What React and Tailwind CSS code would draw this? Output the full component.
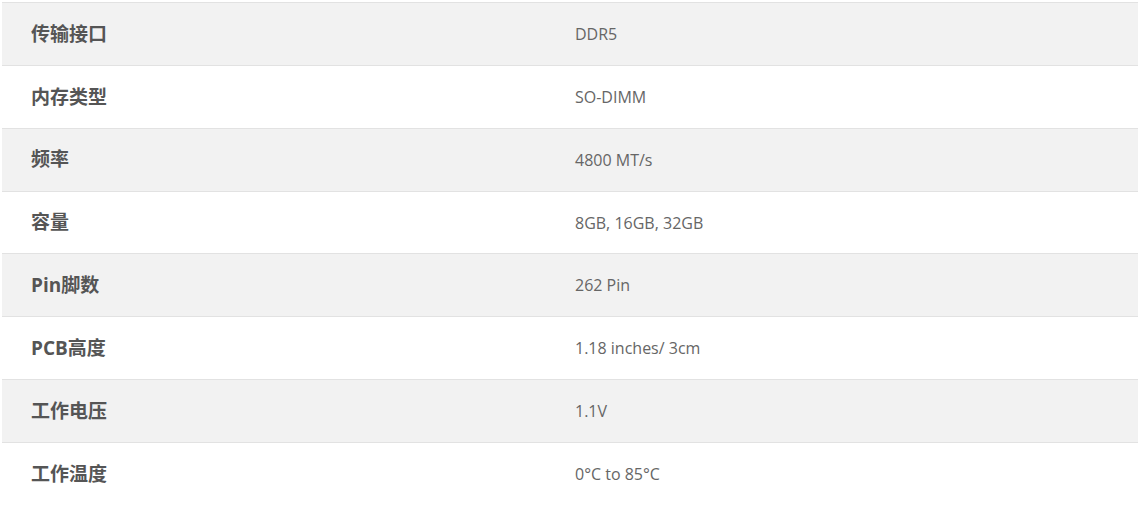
import React from "react";

const rows = [
  ["传输接口", "DDR5"],
  ["内存类型", "SO-DIMM"],
  ["频率", "4800 MT/s"],
  ["容量", "8GB, 16GB, 32GB"],
  ["Pin脚数", "262 Pin"],
  ["PCB高度", "1.18 inches/ 3cm"],
  ["工作电压", "1.1V"],
  ["工作温度", "0°C to 85°C"],
];

export default function App() {
  return (
    <div className="w-[1138px] h-[513px] bg-white overflow-hidden pt-[2px] pl-[2px] font-['Open_Sans','Noto_Sans_CJK_SC',sans-serif]">
      <div className="w-[1136px] flex flex-col">
        {rows.map(([k, v], i) => (
          <div
            key={k}
            className={`h-[62.86px] border-t border-[#e2e2e2] flex items-center ${i % 2 === 0 ? "bg-[#f2f2f2]" : "bg-white"}`}
          >
            <div className="w-[544px] pl-[29px] text-[19px] font-bold text-[#555555]">{k}</div>
            <div className="pl-[29px] text-[16px] text-[#666666]">{v}</div>
          </div>
        ))}
      </div>
    </div>
  );
}
